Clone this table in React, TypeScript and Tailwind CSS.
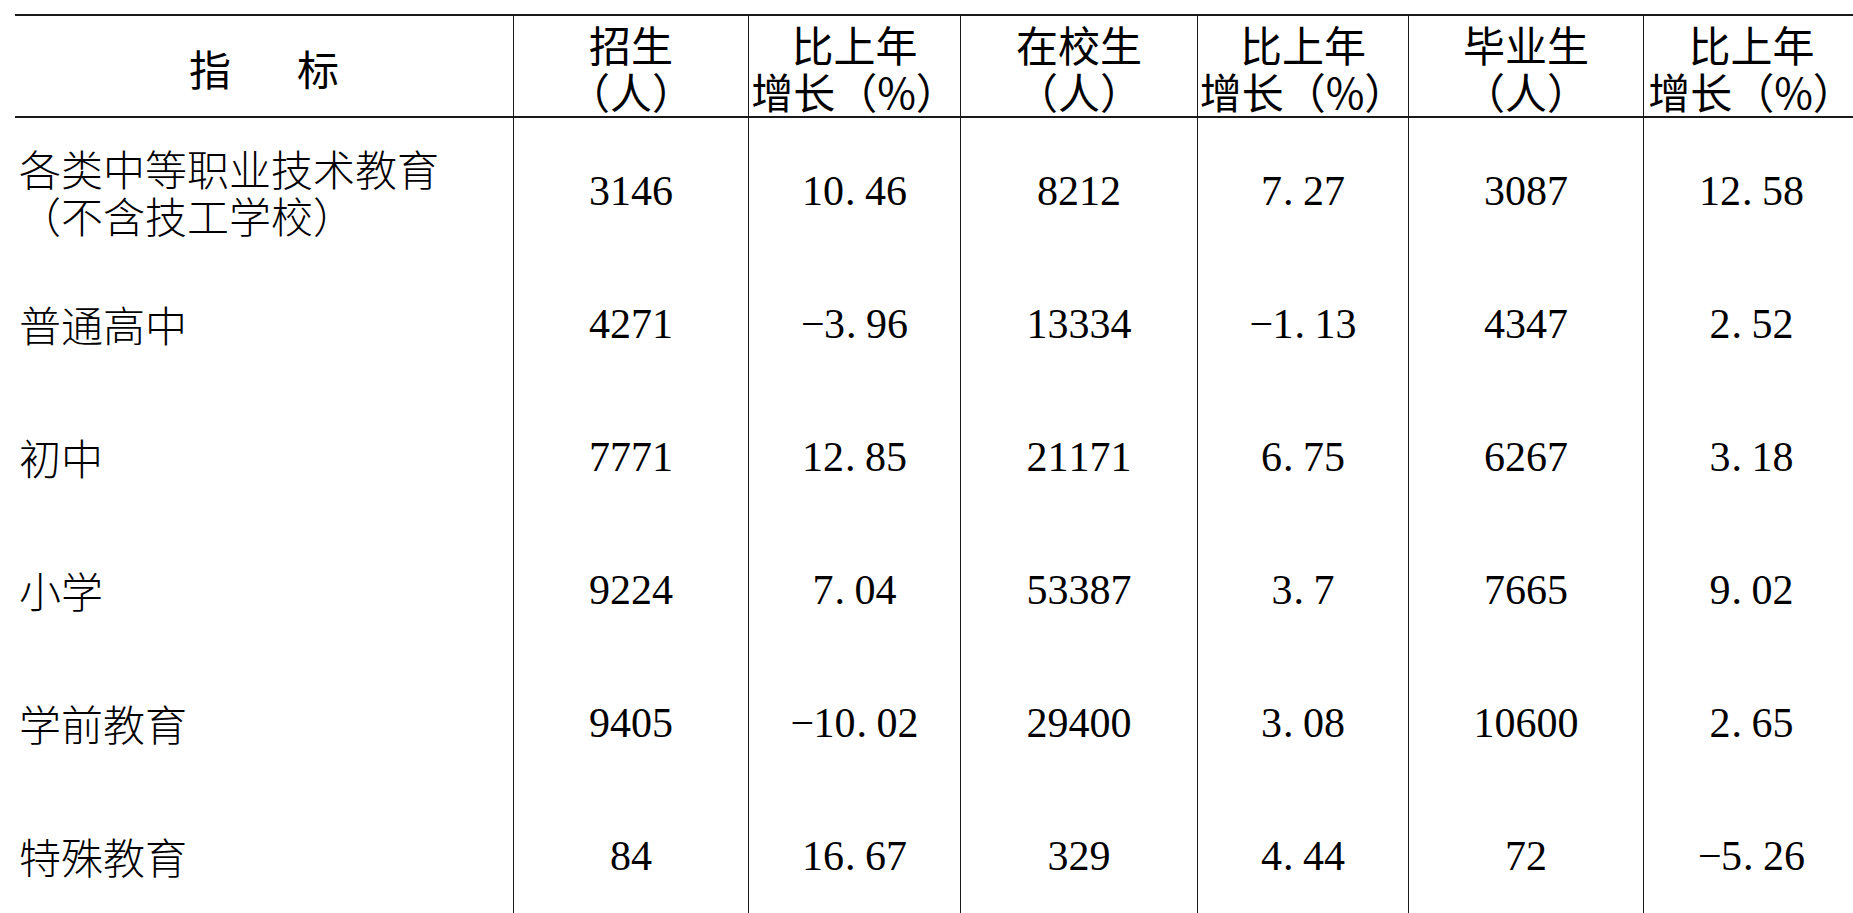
import React from "react";

const cols = "grid grid-cols-[498px_235px_212px_237px_211px_235px_216px]";
const cjk = { fontFamily: '"Noto Sans CJK SC", "Noto Sans", sans-serif' };

function Num({ v }: { v: string }) {
  return (
    <span className="inline-flex items-baseline text-[42px] leading-none text-black" style={{ fontFamily: '"Liberation Serif", serif' }}>
      {v.split("").map((c, i) => {
        if (c === ".") return <span key={i} className="inline-block w-[21px] text-left pl-[1px]">.</span>;
        if (c === "-") return <span key={i} className="inline-block w-[23px] text-left">−</span>;
        return <span key={i} className="inline-block w-[21px] text-center">{c}</span>;
      })}
    </span>
  );
}

const rows: { name: string[]; vals: string[] }[] = [
  { name: ["各类中等职业技术教育", "（不含技工学校）"], vals: ["3146", "10.46", "8212", "7.27", "3087", "12.58"] },
  { name: ["普通高中"], vals: ["4271", "-3.96", "13334", "-1.13", "4347", "2.52"] },
  { name: ["初中"], vals: ["7771", "12.85", "21171", "6.75", "6267", "3.18"] },
  { name: ["小学"], vals: ["9224", "7.04", "53387", "3.7", "7665", "9.02"] },
  { name: ["学前教育"], vals: ["9405", "-10.02", "29400", "3.08", "10600", "2.65"] },
  { name: ["特殊教育"], vals: ["84", "16.67", "329", "4.44", "72", "-5.26"] },
];

const headers: [string, string][] = [
  ["招生", "（人）"],
  ["比上年", "增长（%）"],
  ["在校生", "（人）"],
  ["比上年", "增长（%）"],
  ["毕业生", "（人）"],
  ["比上年", "增长（%）"],
];

export default function App() {
  return (
    <div className="w-[1853px] h-[913px] overflow-hidden bg-white">
      <div className="pl-[15px] pt-[14px] w-[1859px]">
        {/* header */}
        <div className={`${cols} h-[104px] border-t-2 border-b-2 border-[#1a1a1a]`}>
          <div className="flex items-center justify-center gap-[66px] text-[42px] text-black pt-[2px]" style={cjk}>
            <span>指</span>
            <span>标</span>
          </div>
          {headers.map((h, i) => (
            <div key={i} className="flex flex-col items-center justify-center border-l-[1.5px] border-[#1a1a1a] text-[42px] leading-[47px] text-black pt-[2px]" style={cjk}>
              <span>{h[0]}</span>
              <span>{h[1]}</span>
            </div>
          ))}
        </div>
        {/* body */}
        {rows.map((r, ri) => (
          <div key={ri} className={`${cols} ${ri === 0 ? "h-[139px] pt-[6px]" : "h-[133px]"}`}>
            <div className="flex flex-col justify-center pl-[4px] text-[42px] leading-[47px] font-light text-black" style={cjk}>
              {r.name.map((n, ni) => (
                <span key={ni}>{n}</span>
              ))}
            </div>
            {r.vals.map((v, vi) => (
              <div key={vi} className={`flex items-center justify-center border-l-[1.5px] border-[#1a1a1a] ${ri === 0 ? "-mt-[6px] pt-[6px]" : ""}`}>
                <Num v={v} />
              </div>
            ))}
          </div>
        ))}
      </div>
    </div>
  );
}
